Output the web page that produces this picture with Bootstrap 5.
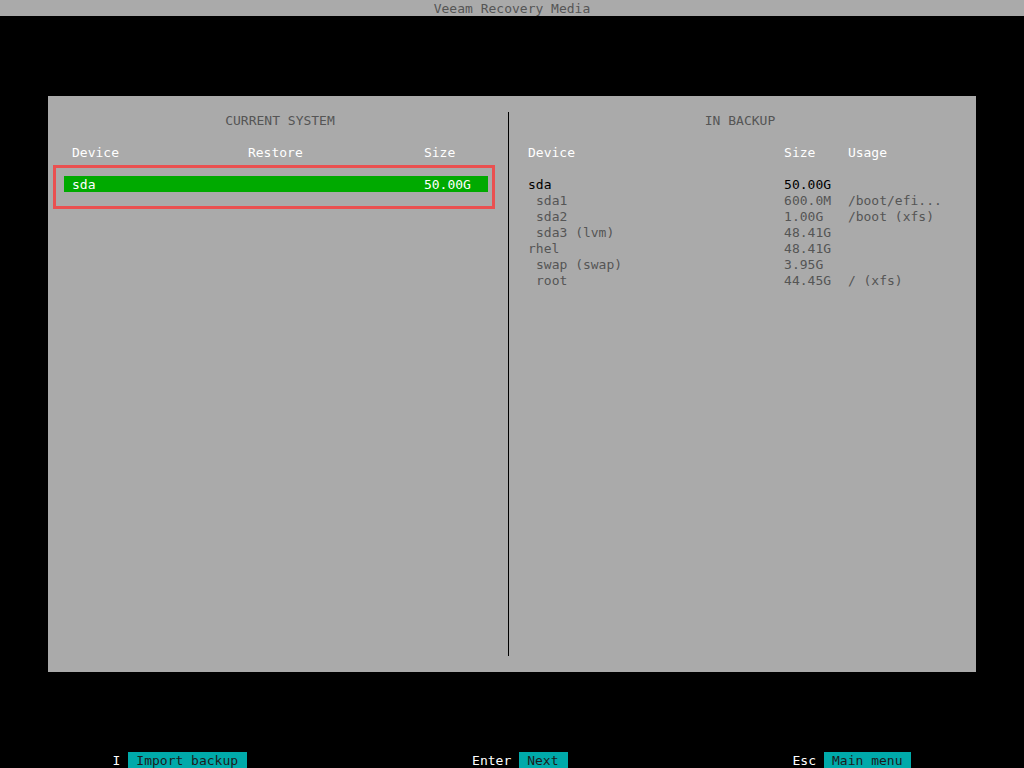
<!DOCTYPE html>
<html lang="en">
<head>
<meta charset="utf-8">
<meta name="viewport" content="width=device-width, initial-scale=1">
<title>Veeam Recovery Media</title>
<link href="https://cdn.jsdelivr.net/npm/bootstrap@5.3.0/dist/css/bootstrap.min.css" rel="stylesheet">
<style>
  body, button, table { font-family: "DejaVu Sans Mono", monospace; font-size: 13px; line-height: 14px; }
  body { background: #000; color: #555; }
  h1, h2 { font-size: 13px; line-height: 14px; font-weight: 400; margin: 0; padding-top: 2px; text-align: center; }
  .surface { background: #aaa; }
  .dialog { margin: 80px 48px; padding: 16px; display: grid; grid-template-columns: 444fr 1px 451fr; }
  .pane-left { padding-right: 20px; }
  .pane-left h2 { padding-left: 8px; }
  .pane-right { padding-left: 11px; }
  .divider { background: #000; }
  .devices { width: 100%; table-layout: fixed; margin-top: 16px; white-space: nowrap; }
  .devices th, .devices td { padding: 2px 0 0 8px; font-weight: 400; text-align: left; }
  .devices thead th { color: #fff; padding-bottom: 16px; }
  .devices td.child { padding-left: 16px; }
  .chosen { background: #0a0; color: #fff; }
  .disk { color: #000; }
  .callout-box { position: absolute; left: -11px; right: 13px; top: 53px; height: 44px; border: 3px solid #ea5050; pointer-events: none; }
  .keys label { color: #fff; padding-top: 2px; }
  .keys button { background: #0aa; color: #1c1c1c; border: 0; padding: 2px 9px 0 8px; }
</style>
</head>
<body class="d-flex flex-column min-vh-100">
  <header class="surface"><h1>Veeam Recovery Media</h1></header>

  <main class="dialog surface flex-grow-1">
    <section class="pane-left position-relative">
      <h2>CURRENT SYSTEM</h2>
      <table class="devices">
        <colgroup><col style="width:41.5%"><col style="width:41.5%"><col style="width:17%"></colgroup>
        <thead><tr><th>Device</th><th>Restore</th><th>Size</th></tr></thead>
        <tbody><tr class="chosen"><td>sda</td><td></td><td>50.00G</td></tr></tbody>
      </table>
      <div class="callout-box"></div>
    </section>
    <div class="divider"></div>
    <section class="pane-right">
      <h2>IN BACKUP</h2>
      <table class="devices">
        <colgroup><col style="width:58.2%"><col style="width:14.5%"><col style="width:27.3%"></colgroup>
        <thead><tr><th>Device</th><th>Size</th><th>Usage</th></tr></thead>
        <tbody>
          <tr class="disk"><td>sda</td><td>50.00G</td><td></td></tr>
          <tr><td class="child">sda1</td><td>600.0M</td><td>/boot/efi...</td></tr>
          <tr><td class="child">sda2</td><td>1.00G</td><td>/boot (xfs)</td></tr>
          <tr><td class="child">sda3 (lvm)</td><td>48.41G</td><td></td></tr>
          <tr><td>rhel</td><td>48.41G</td><td></td></tr>
          <tr><td class="child">swap (swap)</td><td>3.95G</td><td></td></tr>
          <tr><td class="child">root</td><td>44.45G</td><td>/ (xfs)</td></tr>
        </tbody>
      </table>
    </section>
  </main>

  <footer class="keys d-flex justify-content-around">
    <div class="d-flex gap-2"><label for="import">I</label><button id="import" type="button">Import backup</button></div>
    <div class="d-flex gap-2"><label for="next">Enter</label><button id="next" type="button">Next</button></div>
    <div class="d-flex gap-2"><label for="menu">Esc</label><button id="menu" type="button">Main menu</button></div>
  </footer>
  <script src="https://cdn.jsdelivr.net/npm/bootstrap@5.3.0/dist/js/bootstrap.bundle.min.js"></script>
</body>
</html>
